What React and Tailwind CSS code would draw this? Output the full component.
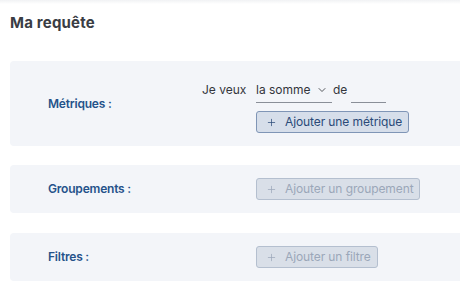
import { Plus, ChevronDown } from 'lucide-react';

function AddButton({ label, disabled }) {
    return (
        <button
            className={`flex items-center h-[22px] pl-[9px] pr-[6px] rounded-[3px] border text-[12px] tracking-[-0.1px] ${disabled
                ? 'bg-[#d9dfe8] border-[#b4bfcf] text-[#9ba7b9]'
                : 'bg-[#d6deea] border-[#7f95b6] text-[#2a4a78]'
                }`}
        >
            <Plus size={11} strokeWidth={1.6} className="mr-[8px]" />
            <span>{label}</span>
        </button>
    );
}

function Panel({ label, height, children }) {
    return (
        <div className={`flex items-center w-[470px] ml-[10px] rounded-l-[4px] bg-[#f3f5f9] ${height}`}>
            <div className="w-[154px] pl-[38px] text-[12px] font-semibold tracking-[-0.2px] text-[#25528a]">{label}</div>
            {children}
        </div>
    );
}

export default function App() {
    return (
        <div className="relative w-[460px] h-[296px] overflow-hidden bg-white" style={{ fontFamily: 'Inter, "Liberation Sans", sans-serif' }}>
            <div className="absolute top-0 left-0 right-0 h-[4px] bg-gradient-to-b from-[#f1f2f4] to-white" />
            <h1 className="pt-[13px] pl-[10px] text-[15px] leading-[20px] font-bold tracking-[0.2px] text-[#3a3d44]">Ma requête</h1>

            <div className="mt-[28px]">
                <Panel label="Métriques :" height="h-[85px]">
                    <div className="flex flex-col pl-[38px] pt-[3px]">
                        <div className="flex items-center h-[26px] text-[12px] text-[#33363c]">
                            <span className="w-[54px]">Je veux</span>
                            <div className="flex items-center w-[76px] h-[26px] border-b border-[#8a8f98]">
                                <span>la somme</span>
                                <ChevronDown size={12} strokeWidth={1.8} className="ml-[5px] text-[#44474d]" />
                            </div>
                            <span className="ml-[1px] w-[18px]">de</span>
                            <div className="w-[35px] h-[26px] border-b border-[#8a8f98]" />
                        </div>
                        <div className="ml-[54px] mt-[8px]">
                            <AddButton label="Ajouter une métrique" />
                        </div>
                    </div>
                </Panel>

                <div className="mt-[19px]">
                    <Panel label="Groupements :" height="h-[48px]">
                        <div className="pl-[92px]">
                            <AddButton label="Ajouter un groupement" disabled />
                        </div>
                    </Panel>
                </div>

                <div className="mt-[20px]">
                    <Panel label="Filtres :" height="h-[48px]">
                        <div className="pl-[92px]">
                            <AddButton label="Ajouter un filtre" disabled />
                        </div>
                    </Panel>
                </div>
            </div>
        </div>
    );
}
